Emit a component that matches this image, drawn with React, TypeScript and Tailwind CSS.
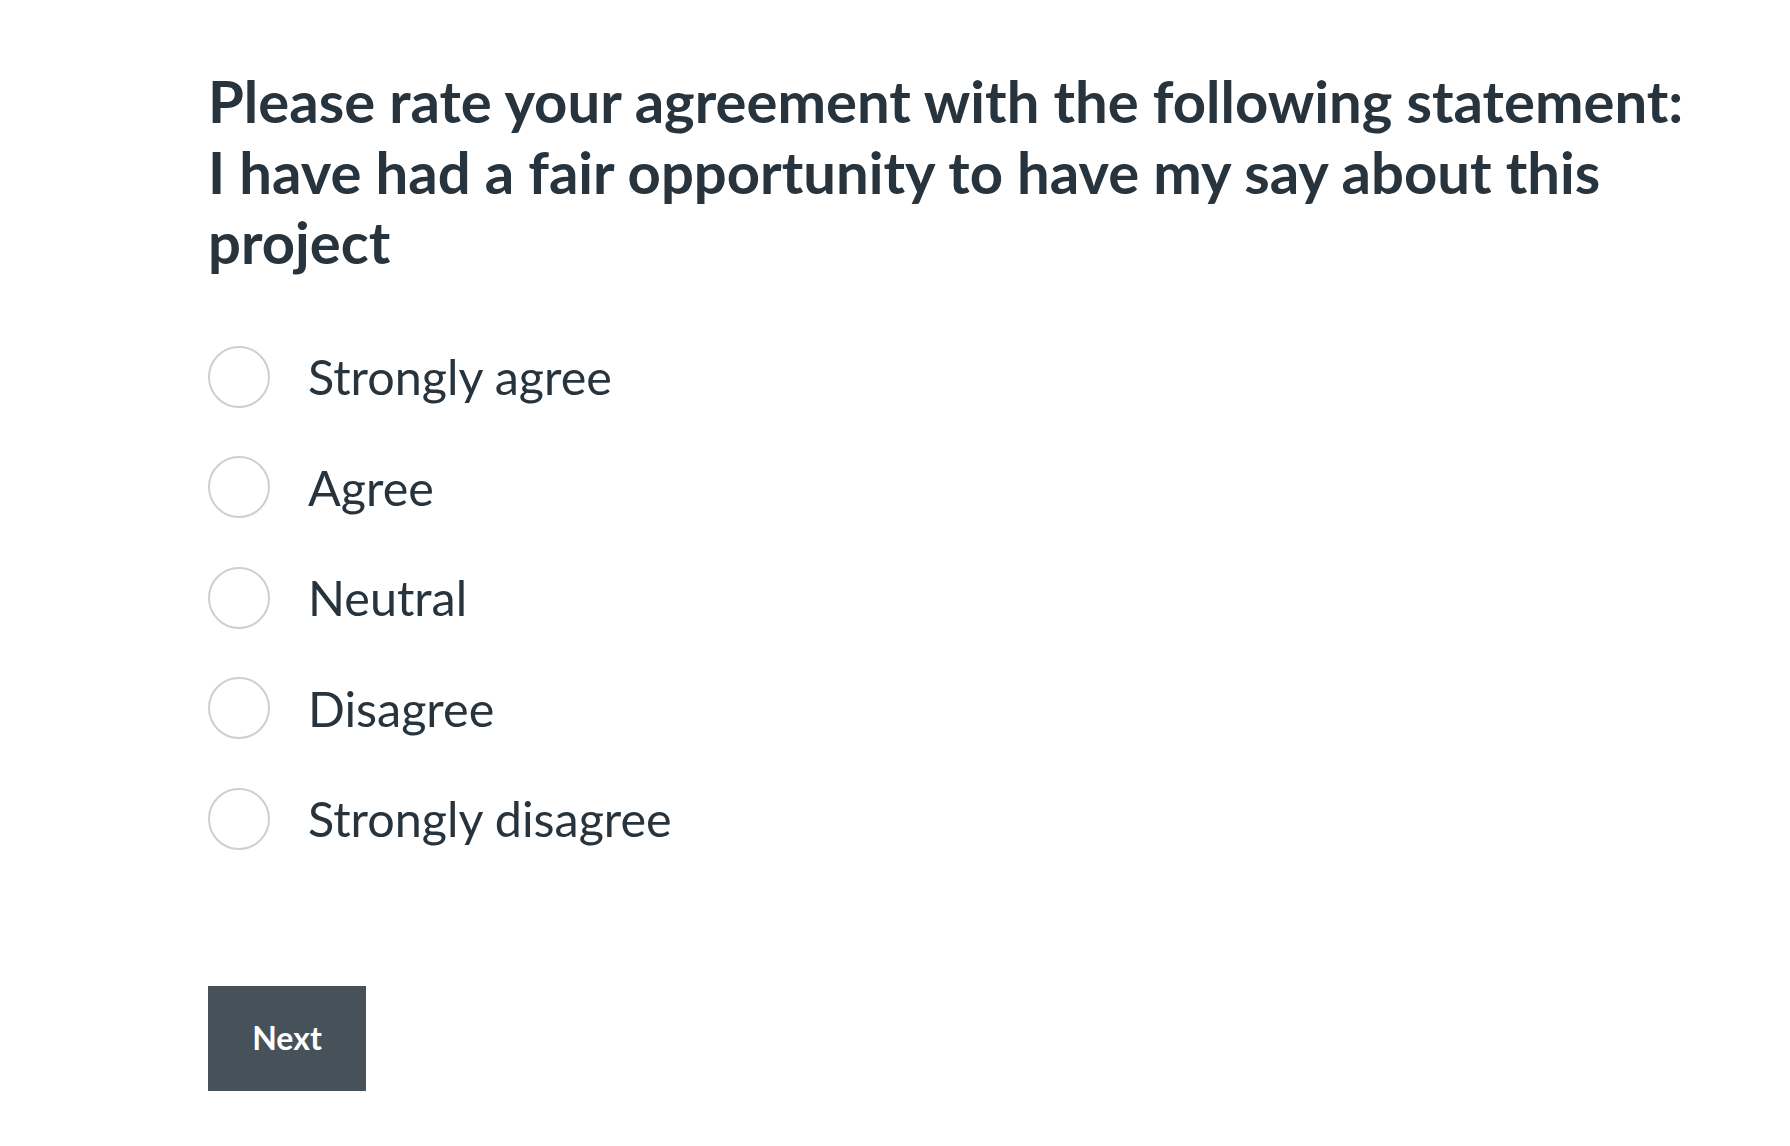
const options = ['Strongly agree', 'Agree', 'Neutral', 'Disagree', 'Strongly disagree'];

export default function App() {
  return (
    <div className="min-h-screen bg-white font-['Lato',sans-serif] text-[#28343d]">
      <div className="pl-[208px] pt-[66px]">
        <h1 className="w-[1500px] text-[58px] font-bold leading-[70.5px]">
          Please rate your agreement with the following statement:
          <br />
          I have had a fair opportunity to have my say about this project
        </h1>
        <div className="mt-[68px] flex flex-col gap-[48.5px]">
          {options.map((label) => (
            <label key={label} className="flex cursor-pointer items-center gap-[38px]">
              <span className="h-[62px] w-[62px] shrink-0 rounded-full border-2 border-[#cfcfcf] bg-white" />
              <span className="text-[48.5px] leading-none">{label}</span>
            </label>
          ))}
        </div>
        <button className="mt-[136px] flex h-[105px] w-[158px] items-center justify-center bg-[#465159] text-[32px] font-bold text-white">
          Next
        </button>
      </div>
    </div>
  );
}
